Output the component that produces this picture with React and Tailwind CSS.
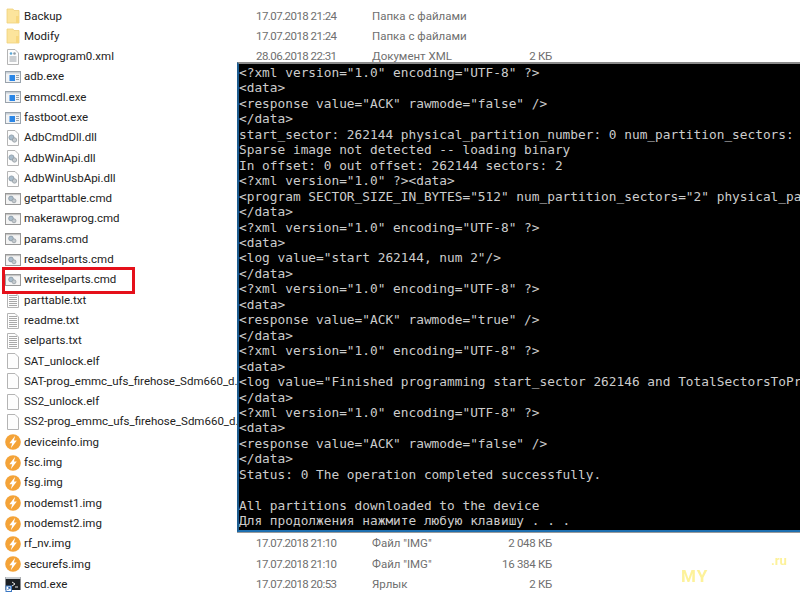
import React from 'react';

const files = [
  { name: 'Backup', icon: 'folder', date: '17.07.2018 21:24', type: 'Папка с файлами' },
  { name: 'Modify', icon: 'folder', date: '17.07.2018 21:24', type: 'Папка с файлами' },
  { name: 'rawprogram0.xml', icon: 'xml', date: '28.06.2018 22:31', type: 'Документ XML', size: '2 КБ' },
  { name: 'adb.exe', icon: 'exe' },
  { name: 'emmcdl.exe', icon: 'exe' },
  { name: 'fastboot.exe', icon: 'exe' },
  { name: 'AdbCmdDll.dll', icon: 'dll' },
  { name: 'AdbWinApi.dll', icon: 'dll' },
  { name: 'AdbWinUsbApi.dll', icon: 'dll' },
  { name: 'getparttable.cmd', icon: 'cmd' },
  { name: 'makerawprog.cmd', icon: 'cmd' },
  { name: 'params.cmd', icon: 'cmd' },
  { name: 'readselparts.cmd', icon: 'cmd' },
  { name: 'writeselparts.cmd', icon: 'cmd' },
  { name: 'parttable.txt', icon: 'txt' },
  { name: 'readme.txt', icon: 'txt' },
  { name: 'selparts.txt', icon: 'txt' },
  { name: 'SAT_unlock.elf', icon: 'blank' },
  { name: 'SAT-prog_emmc_ufs_firehose_Sdm660_d..', icon: 'blank' },
  { name: 'SS2_unlock.elf', icon: 'blank' },
  { name: 'SS2-prog_emmc_ufs_firehose_Sdm660_d..', icon: 'blank' },
  { name: 'deviceinfo.img', icon: 'img' },
  { name: 'fsc.img', icon: 'img' },
  { name: 'fsg.img', icon: 'img' },
  { name: 'modemst1.img', icon: 'img' },
  { name: 'modemst2.img', icon: 'img' },
  { name: 'rf_nv.img', icon: 'img', date: '17.07.2018 21:10', type: 'Файл "IMG"', size: '2 048 КБ' },
  { name: 'securefs.img', icon: 'img', date: '17.07.2018 21:10', type: 'Файл "IMG"', size: '16 384 КБ' },
  { name: 'cmd.exe', icon: 'lnk', date: '17.07.2018 20:53', type: 'Ярлык', size: '2 КБ' },
];

const consoleLines = [
  '<?xml version="1.0" encoding="UTF-8" ?>',
  '<data>',
  '<response value="ACK" rawmode="false" />',
  '</data>',
  'start_sector: 262144 physical_partition_number: 0 num_partition_sectors:',
  'Sparse image not detected -- loading binary',
  'In offset: 0 out offset: 262144 sectors: 2',
  '<?xml version="1.0" ?><data>',
  '<program SECTOR_SIZE_IN_BYTES="512" num_partition_sectors="2" physical_pa',
  '</data>',
  '<?xml version="1.0" encoding="UTF-8" ?>',
  '<data>',
  '<log value="start 262144, num 2"/>',
  '</data>',
  '<?xml version="1.0" encoding="UTF-8" ?>',
  '<data>',
  '<response value="ACK" rawmode="true" />',
  '</data>',
  '<?xml version="1.0" encoding="UTF-8" ?>',
  '<data>',
  '<log value="Finished programming start_sector 262146 and TotalSectorsToPr',
  '</data>',
  '<?xml version="1.0" encoding="UTF-8" ?>',
  '<data>',
  '<response value="ACK" rawmode="false" />',
  '</data>',
  'Status: 0 The operation completed successfully.',
  ' ',
  'All partitions downloaded to the device',
  'Для продолжения нажмите любую клавишу . . .',
];

// Sheet of paper with a folded corner, shared by the document style icons
const Paper = () => (
  <path d="M2.5 .5H10L13.5 4V15.5H2.5Z" fill="#fdfdfd" stroke="#b4b4b4" />
);

const Gears = () => (
  <>
    <circle cx="6.5" cy="7.5" r="2.6" fill="#a9bccb" stroke="#7f8f9c" strokeWidth=".7" />
    <circle cx="9.5" cy="10" r="2.2" fill="#c3c9cd" stroke="#8e979e" strokeWidth=".7" />
  </>
);

const FileIcon = ({ kind }) => {
  switch (kind) {
    case 'folder':
      return (
        <svg width="16" height="16" viewBox="0 0 16 16" className="shrink-0">
          <path d="M2 1H8L9 2.5H14V15H2Z" fill="#fce49c" stroke="#efd07c" strokeWidth=".8" />
          <path d="M11 8H14V15H11Z" fill="#f7d77f" />
        </svg>
      );
    case 'xml':
      return (
        <svg width="16" height="16" viewBox="0 0 16 16" className="shrink-0">
          <Paper />
          <circle cx="6" cy="4.5" r="1.3" fill="#5aa7d6" />
          <circle cx="9.5" cy="4.5" r="1.3" fill="#8f9aa3" />
          <path d="M4.5 8H11.5M4.5 10H11.5M4.5 12H11.5" stroke="#9aa0a6" />
        </svg>
      );
    case 'exe':
      return (
        <svg width="16" height="16" viewBox="0 0 16 16" className="shrink-0">
          <rect x=".5" y="2.5" width="15" height="11" fill="#f1f3f5" stroke="#9aa3ac" />
          <rect x="1" y="3" width="14" height="1.5" fill="#c6ced5" />
          <rect x="4.5" y="6" width="5.5" height="6" fill="#2a86e6" />
          <path d="M11 6.5H14M11 8.5H14M11 10.5H14" stroke="#9aa3ac" />
        </svg>
      );
    case 'dll':
      return (
        <svg width="16" height="16" viewBox="0 0 16 16" className="shrink-0">
          <Paper />
          <Gears />
        </svg>
      );
    case 'cmd':
      return (
        <svg width="16" height="16" viewBox="0 0 16 16" className="shrink-0">
          <rect x=".5" y="2.5" width="15" height="11" fill="#f4f4f4" stroke="#989898" />
          <rect x="1" y="3" width="14" height="1.2" fill="#c6c6c6" />
          <circle cx="6" cy="7.5" r="2.4" fill="#a9bccb" stroke="#7f8f9c" strokeWidth=".7" />
          <circle cx="9" cy="9.8" r="2" fill="#c3c9cd" stroke="#8e979e" strokeWidth=".7" />
        </svg>
      );
    case 'txt':
      return (
        <svg width="16" height="16" viewBox="0 0 16 16" className="shrink-0">
          <Paper />
          <path d="M4 3.5H12M4 5.5H12M4 7.5H12M4 9.5H12M4 11.5H12M4 13.5H12" stroke="#a8a8a8" />
        </svg>
      );
    case 'blank':
      return (
        <svg width="16" height="16" viewBox="0 0 16 16" className="shrink-0">
          <Paper />
        </svg>
      );
    case 'img':
      return (
        <svg width="16" height="16" viewBox="0 0 16 16" className="shrink-0">
          <circle cx="8" cy="8" r="7.8" fill="#f4a338" />
          <path d="M10.2 1.8 4.4 9.2H7.2L5.8 14.2 11.8 6.6H8.9Z" fill="#ffffff" />
        </svg>
      );
    case 'lnk':
      return (
        <svg width="16" height="16" viewBox="0 0 16 16" className="shrink-0">
          <rect x=".5" y="1" width="15" height="13" fill="#1c2024" />
          <rect x=".5" y="1" width="15" height="2" fill="#c9ced3" />
          <path d="M7 6 10 8 7 10M10 11H13" stroke="#e8e8e8" fill="none" />
          <rect x="1" y="10" width="5.5" height="5.5" fill="#ffffff" stroke="#3b78c4" />
          <path d="M2.5 14 5 11.5M3.3 11.5H5V13.2" stroke="#2a62ad" fill="none" />
        </svg>
      );
    default:
      return null;
  }
};

const App = () => {
  return (
    <div className="relative w-[800px] h-[593px] overflow-hidden bg-white pt-[6px] font-['Roboto',sans-serif] text-[11.5px]">
      {files.map(file => (
        <div key={file.name} className="flex items-center h-[20.3px] whitespace-nowrap">
          <div className="w-[24px] pl-[5px] shrink-0">
            <FileIcon kind={file.icon} />
          </div>
          <div className="w-[213px] shrink-0 text-[#222222]">{file.name}</div>
          <div className="ml-[19px] w-[116px] shrink-0 text-[#6f6f6f] tracking-[-0.55px]">{file.date}</div>
          <div className="w-[100px] shrink-0 text-[#6f6f6f]">{file.type}</div>
          <div className="w-[80px] shrink-0 text-right text-[#6f6f6f] tracking-[-0.3px]">{file.size}</div>
        </div>
      ))}

      {/* Selection marker around the cmd file */}
      <div className="absolute left-[2px] top-[267px] w-[133px] h-[27px] border-[3px] border-[#e5101a]"></div>

      {/* Console window lying over the explorer */}
      <div className="absolute left-[237px] top-[62px] w-[563px] h-[470px] overflow-hidden bg-black border-t-2 border-t-[#8a8a8a] border-l-2 border-l-[#1d5c8f] border-b-2 border-b-[#1d6fb0] pt-[1px] font-['DejaVu_Sans_Mono',monospace] text-[12.8px] leading-[15.45px] text-[#cccccc] whitespace-pre shadow-[0_1px_0_#9a9a9a]">
        {consoleLines.map((line, i) => (
          <div key={i}>{line}</div>
        ))}
      </div>

      {/* Watermark */}
      <div className="absolute left-[681px] top-[566px] text-[17px] leading-[20px] font-bold tracking-[1px] text-[#fdf29a] blur-[0.6px]">MY</div>
      <div className="absolute left-[771px] top-[553px] text-[13px] leading-[16px] font-bold text-[#fdf29a] blur-[0.5px]">.ru</div>
    </div>
  );
};

export default App;
